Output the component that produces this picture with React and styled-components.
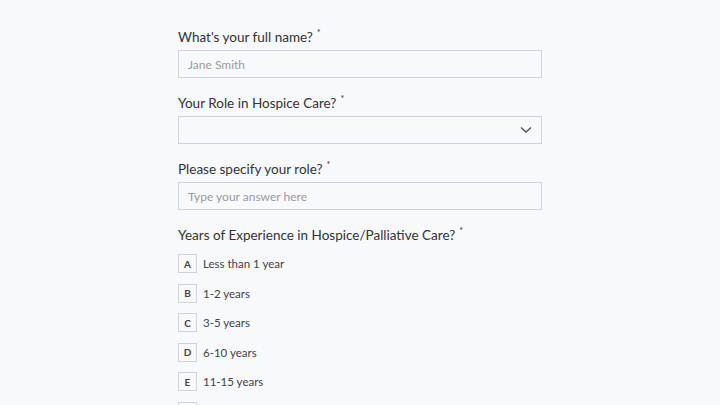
import React from 'react';
import styled, { createGlobalStyle } from 'styled-components';

const Global = createGlobalStyle`
  html, body { margin: 0; padding: 0; background: #f8f9fc; }
  body { font-family: Lato, "Open Sans", sans-serif; color: #3a3a3a; }
`;

const Page = styled.div`
  width: 720px;
  height: 405px;
  overflow: hidden;
  background: #f8f9fc;
  display: flex;
  justify-content: center;
`;

const Form = styled.div`
  width: 364px;
  padding-top: 28px;
  display: flex;
  flex-direction: column;
`;

const Field = styled.div`
  display: flex;
  flex-direction: column;
  margin-bottom: 16px;
`;

const Label = styled.div`
  font-size: 13.5px;
  line-height: 18px;
  height: 18px;
  color: #333;
  margin-bottom: ${p => (p.$options ? 10 : 4)}px;
`;

const Star = styled.span`
  font-size: 9px;
  line-height: 0;
  margin-left: 4px;
  position: relative;
  top: -6px;
`;

const Input = styled.div`
  height: 28px;
  box-sizing: border-box;
  border: 1px solid #cfd2d8;
  background: #f8f9fc;
  display: flex;
  align-items: center;
  justify-content: space-between;
  padding: 0 9px;
  font-size: 12px;
  color: #9a9a9a;
`;

const Options = styled.div`
  display: flex;
  flex-direction: column;
  gap: 10.6px;
`;

const Option = styled.div`
  display: flex;
  align-items: center;
  gap: 6px;
  font-size: 11.5px;
  color: #444;
`;

const Key = styled.span`
  width: 19px;
  height: 19px;
  box-sizing: border-box;
  border: 1px solid #cfd2d8;
  display: flex;
  align-items: center;
  justify-content: center;
  font-size: 10px;
  font-weight: 700;
  color: #444;
`;

const Chevron = () => (
  <svg width="12" height="8" viewBox="0 0 12 8" fill="none">
    <path d="M1 1.5 L6 6 L11 1.5" stroke="#555" strokeWidth="1.4" />
  </svg>
);

const options = [
  ['A', 'Less than 1 year'],
  ['B', '1-2 years'],
  ['C', '3-5 years'],
  ['D', '6-10 years'],
  ['E', '11-15 years'],
  ['F', '16+ years'],
];

export default function App() {
  return (
    <Page>
      <Global />
      <Form>
        <Field>
          <Label>What's your full name?<Star>*</Star></Label>
          <Input>Jane Smith</Input>
        </Field>
        <Field>
          <Label>Your Role in Hospice Care?<Star>*</Star></Label>
          <Input><span /><Chevron /></Input>
        </Field>
        <Field>
          <Label>Please specify your role?<Star>*</Star></Label>
          <Input>Type your answer here</Input>
        </Field>
        <Field>
          <Label $options>Years of Experience in Hospice/Palliative Care?<Star>*</Star></Label>
          <Options>
            {options.map(([k, t]) => (
              <Option key={k}><Key>{k}</Key>{t}</Option>
            ))}
          </Options>
        </Field>
      </Form>
    </Page>
  );
}
